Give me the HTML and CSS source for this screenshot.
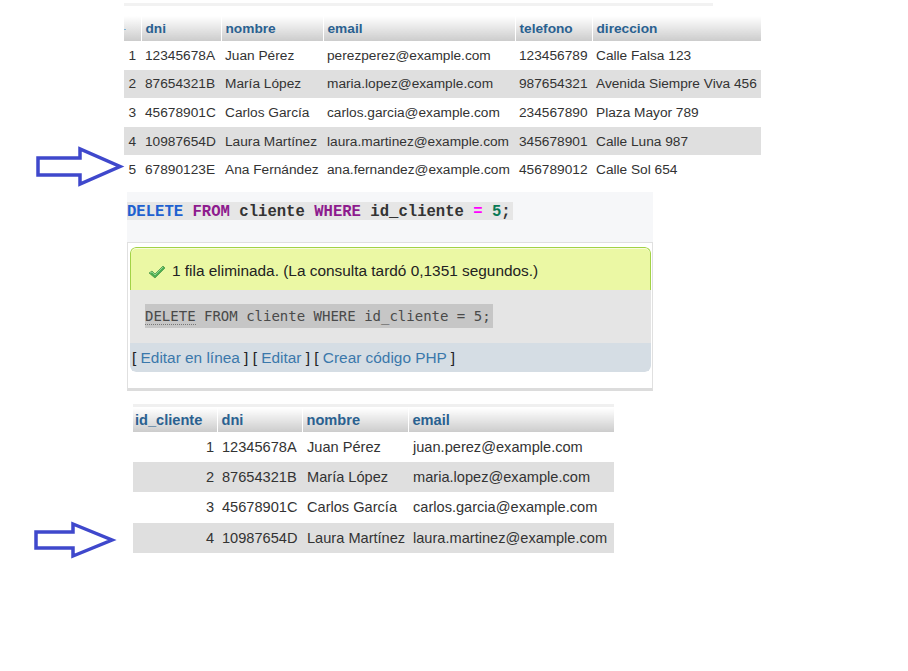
FILE: index.html
```html
<!DOCTYPE html>
<html lang="es">
<head>
<meta charset="utf-8">
<title>DELETE cliente</title>
<link rel="stylesheet" href="styles.css">
</head>
<body>
<div class="page">
  <div class="strip strip-top"></div>
  <table class="grid grid-one">
    <colgroup>
      <col class="c-num"><col class="c-dni"><col class="c-nom"><col class="c-mail"><col class="c-tel"><col class="c-dir">
    </colgroup>
    <thead>
      <tr><th class="cut"><span class="dash"></span></th><th>dni</th><th>nombre</th><th>email</th><th>telefono</th><th>direccion</th></tr>
    </thead>
    <tbody>
      <tr><td class="num">1</td><td>12345678A</td><td>Juan Pérez</td><td>perezperez@example.com</td><td>123456789</td><td>Calle Falsa 123</td></tr>
      <tr class="alt"><td class="num">2</td><td>87654321B</td><td>María López</td><td>maria.lopez@example.com</td><td>987654321</td><td>Avenida Siempre Viva 456</td></tr>
      <tr><td class="num">3</td><td>45678901C</td><td>Carlos García</td><td>carlos.garcia@example.com</td><td>234567890</td><td>Plaza Mayor 789</td></tr>
      <tr class="alt"><td class="num">4</td><td>10987654D</td><td>Laura Martínez</td><td>laura.martinez@example.com</td><td>345678901</td><td>Calle Luna 987</td></tr>
      <tr><td class="num">5</td><td>67890123E</td><td>Ana Fernández</td><td>ana.fernandez@example.com</td><td>456789012</td><td>Calle Sol 654</td></tr>
    </tbody>
  </table>

  <div class="sql-band">
    <code class="sql"><span class="kw-blue">DELETE</span> <span class="kw">FROM</span> cliente <span class="kw">WHERE</span> id_cliente <span class="op">=</span> <span class="numlit">5</span>;</code>
  </div>

  <div class="result">
    <div class="panel">
      <div class="success">
        <svg class="check" width="18" height="14" viewBox="0 0 18 14"><path d="M1 8 L4 6 L7 9 L15 1 L17 3 L7 13 Z" fill="#4caf50" stroke="#3a8a3e" stroke-width="0.6"/><path d="M2 8 L4 7 L7 10 L15 2" fill="none" stroke="#8fd48f" stroke-width="1"/></svg>
        <span>1 fila eliminada. (La consulta tardó 0,1351 segundos.)</span>
      </div>
      <div class="sqlbox">
        <code class="sql-echo"><span class="under">DELETE</span> FROM cliente WHERE id_cliente = 5;</code>
      </div>
      <div class="links">[ <a>Editar en línea</a> ] [ <a>Editar</a> ] [ <a>Crear código PHP</a> ]</div>
    </div>
  </div>

  <div class="strip strip-two"></div>
  <table class="grid grid-two">
    <colgroup>
      <col class="d-id"><col class="d-dni"><col class="d-nom"><col class="d-mail">
    </colgroup>
    <thead>
      <tr><th>id_cliente</th><th>dni</th><th>nombre</th><th>email</th></tr>
    </thead>
    <tbody>
      <tr><td class="num">1</td><td>12345678A</td><td>Juan Pérez</td><td>juan.perez@example.com</td></tr>
      <tr class="alt"><td class="num">2</td><td>87654321B</td><td>María López</td><td>maria.lopez@example.com</td></tr>
      <tr><td class="num">3</td><td>45678901C</td><td>Carlos García</td><td>carlos.garcia@example.com</td></tr>
      <tr class="alt"><td class="num">4</td><td>10987654D</td><td>Laura Martínez</td><td>laura.martinez@example.com</td></tr>
    </tbody>
  </table>

  <svg class="arrows" width="908" height="671" viewBox="0 0 908 671">
    <polygon points="38,158 80,158 80,149 120,166.5 80,184 80,175 38,175" fill="#fff" stroke="#3f48cc" stroke-width="3.5" stroke-linejoin="miter"/>
    <polygon points="36,532 73,532 73,524 112,540 73,556 73,548 36,548" fill="#fff" stroke="#3f48cc" stroke-width="3.5" stroke-linejoin="miter"/>
  </svg>
</div>
</body>
</html>
```

FILE: styles.css
```css
html, body {
  margin: 0;
  padding: 0;
  background: #fff;
}

.page {
  position: relative;
  width: 908px;
  height: 671px;
  font-family: "Liberation Sans", Arial, sans-serif;
  font-size: 14px;
  color: #333;
  padding-top: 3px;
  box-sizing: border-box;
}

.strip {
  height: 3px;
  background: #f2f2f2;
}

.strip-top {
  margin-left: 124px;
  width: 589px;
}

.grid {
  border-collapse: collapse;
  table-layout: fixed;
}

.grid th {
  height: 25px;
  padding: 0 4px;
  text-align: left;
  font-weight: bold;
  color: #2a6190;
  background: linear-gradient(to bottom, #ffffff 0%, #cccccc 100%);
  border-left: 1px solid #fff;
  box-sizing: border-box;
  white-space: nowrap;
  overflow: hidden;
}

.grid th:first-child {
  border-left: none;
}

.grid td {
  padding: 0 4px;
  white-space: nowrap;
  overflow: hidden;
}

.grid td.num {
  text-align: right;
  padding-right: 5px;
}

.grid tr.alt td {
  background: #dfdfdf;
}

.grid-one {
  margin-left: 124px;
  margin-top: 10px;
  width: 637px;
  font-size: 13.7px;
}

.grid-one tbody tr {
  height: 28.6px;
}

.grid-one th {
  height: 25px;
}

.grid-one th.cut {
  padding: 0;
  position: relative;
}

.dash {
  display: block;
  width: 2px;
  height: 1px;
  margin-top: 2px;
  background: #7fb3d5;
}

.c-num { width: 17px; }
.c-dni { width: 80px; }
.c-nom { width: 102px; }
.c-mail { width: 192px; }
.c-tel { width: 77px; }
.c-dir { width: 169px; }

.sql-band {
  margin-top: 8px;
  margin-left: 127px;
  width: 526px;
  height: 50px;
  background: #f6f7f9;
  padding-top: 10px;
  box-sizing: border-box;
}

.sql {
  display: inline-block;
  height: 18px;
  line-height: 21px;
  background: #e6e6e6;
  font-family: "Liberation Mono", "Courier New", monospace;
  font-weight: bold;
  font-size: 15.6px;
  color: #333;
  padding-right: 2px;
  overflow: visible;
}

.kw-blue { color: #2060d0; }
.kw { color: #8e1b8e; }
.op { color: #ff00ff; }
.numlit { color: #0a7a55; }

.result {
  margin-left: 127px;
  width: 526px;
  height: 149px;
  box-sizing: border-box;
  border: 1px solid #e0e0e0;
  border-bottom: 3px solid #dcdcdc;
  padding: 4px 1px 0 2px;
  background: #fff;
}

.panel {
  border-radius: 6px;
  overflow: hidden;
}

.success {
  height: 43px;
  box-sizing: border-box;
  background: #ebf8a4;
  border: 1px solid #a2d246;
  border-bottom: none;
  border-radius: 6px 6px 0 0;
  box-shadow: inset 0 1px 0 #f8fcde;
  display: flex;
  align-items: center;
  gap: 6px;
  padding-left: 17px;
  padding-top: 5px;
  font-size: 15.4px;
  color: #222;
}

.check {
  flex: none;
  margin-top: 1px;
}

.sqlbox {
  height: 53px;
  box-sizing: border-box;
  background: #e5e5e5;
  padding: 14px 0 0 15px;
}

.sql-echo {
  display: inline-block;
  height: 24px;
  line-height: 24px;
  background: #c6c6c6;
  font-family: "DejaVu Sans Mono", monospace;
  font-size: 14px;
  color: #4a4a4a;
  padding-right: 2px;
}

.under {
  border-bottom: 1px dotted #777;
}

.links {
  height: 29px;
  line-height: 30px;
  background: #d5dde4;
  padding-left: 2px;
  font-size: 15.4px;
  color: #222;
  border-radius: 0 0 6px 6px;
}

.links a {
  color: #3b78ab;
}

.strip-two {
  margin-top: 13px;
  margin-left: 133px;
  width: 481px;
  background: #f0f0f0;
}

.grid-two {
  margin-left: 133px;
  margin-top: 1px;
  width: 481px;
  font-size: 14.6px;
}

.grid-two th {
  height: 24px;
  padding: 0 4px;
}

.grid-two th:first-child {
  padding-left: 2px;
}

.grid-two tbody tr {
  height: 30.2px;
}

.grid-two td {
  padding: 0 4px 0 5px;
}

.grid-two td.num {
  padding-right: 3px;
}

.d-id { width: 84px; }
.d-dni { width: 85px; }
.d-nom { width: 106px; }
.d-mail { width: 206px; }

.arrows {
  position: absolute;
  left: 0;
  top: 0;
  pointer-events: none;
}
```
